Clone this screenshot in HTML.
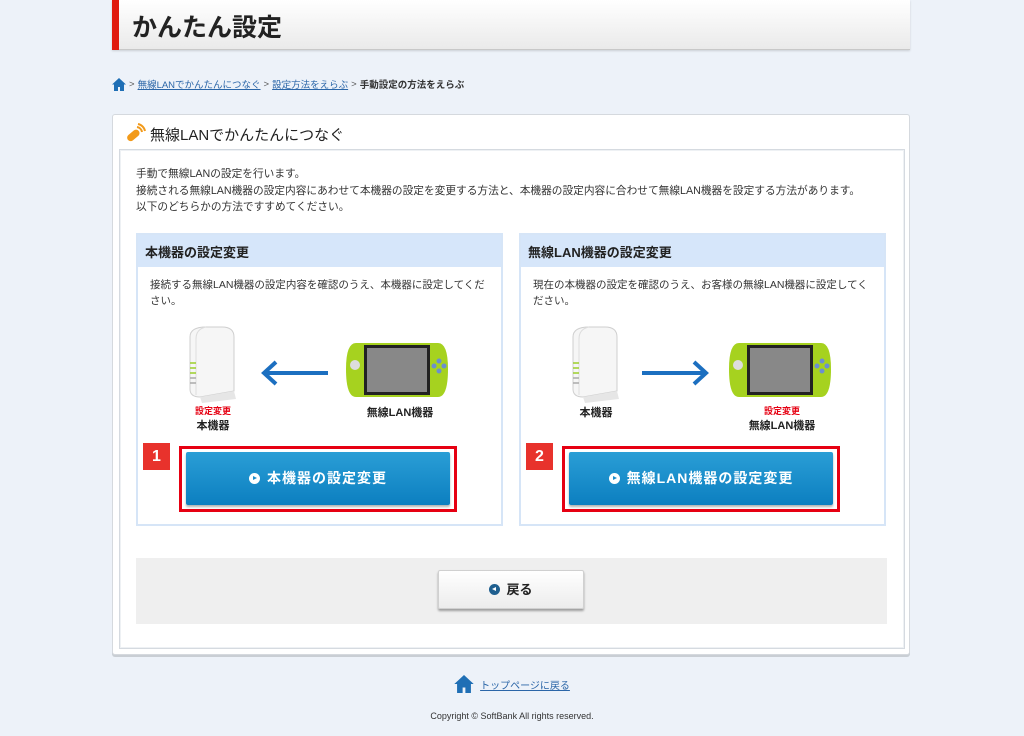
<!DOCTYPE html>
<html><head><meta charset="utf-8">
<style>
*{margin:0;padding:0;box-sizing:border-box}
body{width:1024px;height:736px;background:#edf2f9;font-family:"Liberation Sans","Noto Sans CJK JP",sans-serif;color:#222;position:relative;overflow:hidden}
.abs{position:absolute}
#hdr{left:112px;top:0;width:798px;height:50px;background:linear-gradient(#fff,#eaeaea);border-bottom:1px solid #c8c8c8;box-shadow:0 1px 2px rgba(0,0,0,.15)}
#hdr .red{left:0;top:0;width:7px;height:50px;background:#e01a0e}
#hdr h1{position:absolute;left:20px;top:8px;font-size:25px;font-weight:bold;color:#222}
#bc{left:112px;top:77px;font-size:9.5px;color:#333;white-space:nowrap;display:flex;align-items:center}
#bc a{color:#2b66a8;text-decoration:underline}
#bc span.s{margin:0 3px;color:#555}
#panel{left:112px;top:114px;width:798px;height:541px;background:#fff;border:1px solid #d5d9de;border-radius:3px;box-shadow:0 2px 0 #c9ced4}
#panel .ttl{position:absolute;left:37px;top:9px;font-size:15px;color:#222}
#inner{left:6px;top:34px;width:786px;height:500px;background:#fff;border:1px solid #d5dae0;box-shadow:inset 0 0 0 1px #eef1f4}
.intro{left:136px;top:166px;font-size:10.7px;line-height:16.5px;color:#333;white-space:nowrap}
.card{top:233px;width:367px;height:293px;border:2px solid #d6e5f7;background:#fff}
.card .h{height:32px;background:#d6e6fa;font-size:13px;font-weight:bold;padding:7px 0 0 7px;color:#222}
.card .d{position:absolute;left:12px;top:42px;width:345px;font-size:10.5px;line-height:16px;color:#333}
.num{width:27px;height:27px;background:#e8322c;color:#fff;font-weight:bold;font-size:16px;text-align:center;line-height:27px}
.rb{width:278px;height:66px;border:3px solid #e60012}
.btn{position:absolute;left:4px;top:3px;width:264px;height:53px;background:linear-gradient(#2a9ed6,#0c7fc0);border-radius:2px;box-shadow:0 2px 2px rgba(0,0,0,.3);color:#fff;font-size:14px;font-weight:bold;text-align:center;line-height:53px;letter-spacing:1px}
.ico{display:inline-block;width:11px;height:11px;border-radius:50%;background:#fff;vertical-align:-1px;margin-right:7px;position:relative}
.ico:after{content:"";position:absolute;left:4px;top:3px;border-left:4px solid #1a8ccb;border-top:2.5px solid transparent;border-bottom:2.5px solid transparent}
.lbl{font-size:11px;font-weight:bold;text-align:center;color:#222}
.lbl .r{color:#e60012;font-size:9px;display:block;line-height:12px}
#gray{left:136px;top:558px;width:751px;height:66px;background:#efefef}
#back{left:438px;top:570px;width:146px;height:39px;background:linear-gradient(#fff,#ececec);border:1px solid #d0d0d0;border-radius:2px;box-shadow:0 2px 2px rgba(0,0,0,.35);font-size:13px;font-weight:bold;text-align:center;line-height:37px;color:#222}
#back .b{display:inline-block;width:11px;height:11px;border-radius:50%;background:#1f5f8f;vertical-align:-1px;margin-right:6px;position:relative}
#back .b:after{content:"";position:absolute;left:3px;top:3px;border-right:4px solid #fff;border-top:2.5px solid transparent;border-bottom:2.5px solid transparent}
#foot{left:0;top:675px;width:1024px;text-align:center;font-size:10px}
#foot a{color:#2b66a8;text-decoration:underline}
#copy{left:0;top:711px;width:1024px;text-align:center;font-size:9px;color:#333}
</style></head><body>
<div id="hdr" class="abs"><div class="red abs"></div><h1>かんたん設定</h1></div>

<div id="bc" class="abs">
<svg width="14" height="13" viewBox="0 0 14 13"><path d="M7 0L0 6.5h2V13h4V9h2v4h4V6.5h2z" fill="#1f6fb5"/></svg>
<span class="s">&gt;</span><a>無線LANでかんたんにつなぐ</a><span class="s">&gt;</span><a>設定方法をえらぶ</a><span class="s">&gt;</span><b>手動設定の方法をえらぶ</b>
</div>

<div id="panel" class="abs">
<svg class="abs" style="left:10px;top:7px" width="24" height="24" viewBox="0 0 24 24"><rect x="3" y="10" width="14" height="7" rx="3.5" transform="rotate(-40 10 13)" fill="#f29a1a"/><path d="M14 5a6 6 0 0 1 5 5M15 2a9 9 0 0 1 7 7" stroke="#f29a1a" stroke-width="2" fill="none"/></svg>
<div class="ttl">無線LANでかんたんにつなぐ</div>
<div id="inner" class="abs"></div>
</div>

<div class="intro abs">手動で無線LANの設定を行います。<br>接続される無線LAN機器の設定内容にあわせて本機器の設定を変更する方法と、本機器の設定内容に合わせて無線LAN機器を設定する方法があります。<br>以下のどちらかの方法ですすめてください。</div>

<div class="card abs" style="left:136px">
<div class="h">本機器の設定変更</div>
<div class="d">接続する無線LAN機器の設定内容を確認のうえ、本機器に設定してください。</div>
</div>
<div class="card abs" style="left:519px">
<div class="h">無線LAN機器の設定変更</div>
<div class="d">現在の本機器の設定を確認のうえ、お客様の無線LAN機器に設定してください。</div>
</div>

<svg class="abs" style="left:186px;top:325px" width="54" height="78" viewBox="0 0 54 78">
<path d="M4 12 Q4 2 20 2 L36 2 Q48 2 48 12 L48 66 L14 72 Q4 72 4 64Z" fill="#f6f6f6" stroke="#cfcfcf"/>
<path d="M20 2 Q10 4 10 14 L10 70" stroke="#ddd" fill="none"/>
<path d="M14 72 L48 66 L50 74 L16 78Z" fill="#e6e6e6"/>
<g stroke="#9bcf2a" stroke-width="1.5"><line x1="4" y1="38" x2="10" y2="38"/><line x1="4" y1="43" x2="10" y2="43"/><line x1="4" y1="48" x2="10" y2="48"/></g>
<g stroke="#aaa" stroke-width="1.5"><line x1="4" y1="53" x2="10" y2="53"/><line x1="4" y1="58" x2="10" y2="58"/></g>
</svg>
<svg class="abs" style="left:569px;top:325px" width="54" height="78" viewBox="0 0 54 78">
<path d="M4 12 Q4 2 20 2 L36 2 Q48 2 48 12 L48 66 L14 72 Q4 72 4 64Z" fill="#f6f6f6" stroke="#cfcfcf"/>
<path d="M20 2 Q10 4 10 14 L10 70" stroke="#ddd" fill="none"/>
<path d="M14 72 L48 66 L50 74 L16 78Z" fill="#e6e6e6"/>
<g stroke="#9bcf2a" stroke-width="1.5"><line x1="4" y1="38" x2="10" y2="38"/><line x1="4" y1="43" x2="10" y2="43"/><line x1="4" y1="48" x2="10" y2="48"/></g>
<g stroke="#aaa" stroke-width="1.5"><line x1="4" y1="53" x2="10" y2="53"/><line x1="4" y1="58" x2="10" y2="58"/></g>
</svg>

<svg class="abs" style="left:346px;top:341px" width="102" height="58" viewBox="0 0 102 58">
<path d="M10 2 H92 Q102 2 102 28 Q102 56 92 56 H10 Q0 56 0 28 Q0 2 10 2Z" fill="#a6d21f"/>
<rect x="18" y="4" width="66" height="50" fill="#222"/><rect x="21" y="7" width="60" height="44" fill="#888"/>
<circle cx="9" cy="24" r="5" fill="#ddd"/>
<g fill="#6b8fd0"><circle cx="93" cy="20" r="2.5"/><circle cx="93" cy="30" r="2.5"/><circle cx="88" cy="25" r="2.5"/><circle cx="98" cy="25" r="2.5"/></g>
</svg>
<svg class="abs" style="left:729px;top:341px" width="102" height="58" viewBox="0 0 102 58">
<path d="M10 2 H92 Q102 2 102 28 Q102 56 92 56 H10 Q0 56 0 28 Q0 2 10 2Z" fill="#a6d21f"/>
<rect x="18" y="4" width="66" height="50" fill="#222"/><rect x="21" y="7" width="60" height="44" fill="#888"/>
<circle cx="9" cy="24" r="5" fill="#ddd"/>
<g fill="#6b8fd0"><circle cx="93" cy="20" r="2.5"/><circle cx="93" cy="30" r="2.5"/><circle cx="88" cy="25" r="2.5"/><circle cx="98" cy="25" r="2.5"/></g>
</svg>

<svg class="abs" style="left:260px;top:360px" width="68" height="26" viewBox="0 0 68 26"><path d="M68 13H6M16 2L4 13L16 24" stroke="#1c6fc0" stroke-width="4" fill="none"/></svg>
<svg class="abs" style="left:642px;top:360px" width="68" height="26" viewBox="0 0 68 26"><path d="M0 13H62M52 2L64 13L52 24" stroke="#1c6fc0" stroke-width="4" fill="none"/></svg>

<div class="lbl abs" style="left:183px;top:405px;width:60px"><span class="r">設定変更</span>本機器</div>
<div class="lbl abs" style="left:350px;top:404px;width:100px">無線LAN機器</div>
<div class="lbl abs" style="left:566px;top:404px;width:60px">本機器</div>
<div class="lbl abs" style="left:730px;top:405px;width:104px"><span class="r">設定変更</span>無線LAN機器</div>

<div class="num abs" style="left:143px;top:443px">1</div>
<div class="rb abs" style="left:179px;top:446px"><div class="btn"><span class="ico"></span>本機器の設定変更</div></div>
<div class="num abs" style="left:526px;top:443px">2</div>
<div class="rb abs" style="left:562px;top:446px"><div class="btn"><span class="ico"></span>無線LAN機器の設定変更</div></div>

<div id="gray" class="abs"></div>
<div id="back" class="abs"><span class="b"></span>戻る</div>

<div id="foot" class="abs"><svg width="20" height="18" viewBox="0 0 14 13" style="vertical-align:-4px;margin-right:6px"><path d="M7 0L0 6.5h2V13h4V9h2v4h4V6.5h2z" fill="#1f6fb5"/></svg><a>トップページに戻る</a></div>
<div id="copy" class="abs">Copyright © SoftBank All rights reserved.</div>
</body></html>
